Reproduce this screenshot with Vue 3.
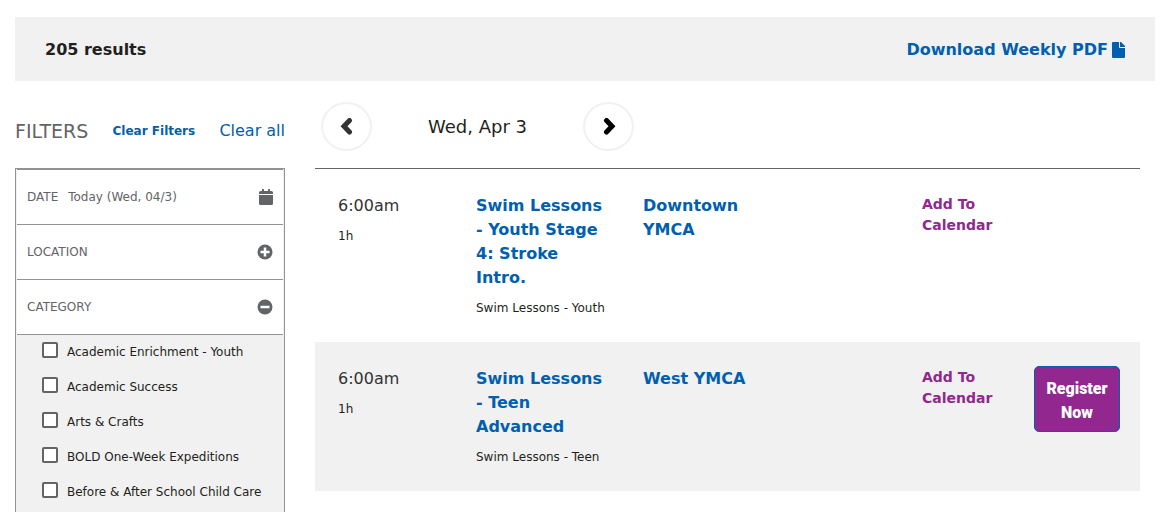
<script setup>
import { ref } from 'vue'

const categories = ref([
  { id: 'enrichment', name: 'Academic Enrichment - Youth', checked: false },
  { id: 'success', name: 'Academic Success', checked: false },
  { id: 'arts', name: 'Arts & Crafts', checked: false },
  { id: 'bold', name: 'BOLD One-Week Expeditions', checked: false },
  { id: 'care', name: 'Before & After School Child Care', checked: false },
])

const sessions = [
  {
    id: 1,
    time: '6:00am',
    duration: '1h',
    title: 'Swim Lessons - Youth Stage 4: Stroke Intro.',
    category: 'Swim Lessons - Youth',
    location: 'Downtown YMCA',
    register: false,
  },
  {
    id: 2,
    time: '6:00am',
    duration: '1h',
    title: 'Swim Lessons - Teen Advanced',
    category: 'Swim Lessons - Teen',
    location: 'West YMCA',
    register: true,
  },
]
</script>

<template>
  <div class="page">
    <header class="results">
      <strong>205 results</strong>
      <a href="#" class="pdf">
        Download Weekly PDF
        <svg width="13" height="16" viewBox="0 0 13 16" aria-hidden="true">
          <path d="M1 0h6v5q0 1 1 1h5v9q0 1-1 1H1q-1 0-1-1V1q0-1 1-1z" />
          <path d="M8 0h1l4 4v1H8z" />
        </svg>
      </a>
    </header>

    <div class="columns">
      <aside>
        <div class="filter-head">
          <h2>FILTERS</h2>
          <a href="#" class="clear-filters">Clear Filters</a>
          <a href="#" class="clear-all">Clear all</a>
        </div>
        <div class="filters">
          <button type="button" class="filter">
            <span>DATE</span>
            <span class="value">Today (Wed, 04/3)</span>
            <svg width="14" height="16" viewBox="0 0 14 16" aria-hidden="true">
              <path d="M0 5V3.500Q0 2 1.500 2H3V.500Q3 0 3.500 0h1q.500 0 .500.500V2h4V.500Q9 0 9.500 0h1q.500 0 .500.500V2h1.500Q14 2 14 3.500V5zM0 6h14v8.500q0 1.500-1.500 1.500h-11Q0 16 0 14.500z" />
            </svg>
          </button>
          <button type="button" class="filter" aria-expanded="false">
            <span>LOCATION</span>
            <svg width="16" height="16" viewBox="0 0 16 16" aria-hidden="true">
              <circle cx="8" cy="8" r="7.500" />
              <path class="sign" d="M3.500 8h9M8 3.500v9" />
            </svg>
          </button>
          <button type="button" class="filter" aria-expanded="true">
            <span>CATEGORY</span>
            <svg width="16" height="16" viewBox="0 0 16 16" aria-hidden="true">
              <circle cx="8" cy="8" r="7.500" />
              <path class="sign" d="M3.500 8h9" />
            </svg>
          </button>
          <ul class="options">
            <li v-for="c in categories" :key="c.id">
              <input :id="c.id" v-model="c.checked" type="checkbox" />
              <label :for="c.id">{{ c.name }}</label>
            </li>
          </ul>
        </div>
      </aside>

      <main>
        <div class="day-nav">
          <button type="button" class="arrow" aria-label="Previous day">
            <svg class="prev" width="14" height="18" viewBox="0 0 14 18" aria-hidden="true">
              <path d="M9.500 2.500 4 8.200l5.500 5.800" />
            </svg>
          </button>
          <span class="day">Wed, Apr 3</span>
          <button type="button" class="arrow" aria-label="Next day">
            <svg width="14" height="18" viewBox="0 0 14 18" aria-hidden="true">
              <path d="M4.500 2.500 10 8.200 4.500 14" />
            </svg>
          </button>
        </div>

        <section class="schedule">
          <article v-for="s in sessions" :key="s.id" class="session">
            <div>
              <div class="time">{{ s.time }}</div>
              <div class="small">{{ s.duration }}</div>
            </div>
            <div>
              <a href="#" class="title">{{ s.title }}</a>
              <div class="small">{{ s.category }}</div>
            </div>
            <div>
              <a href="#" class="title place">{{ s.location }}</a>
            </div>
            <div>
              <a href="#" class="calendar">Add To Calendar</a>
            </div>
            <div class="action">
              <button v-if="s.register" type="button" class="register">Register Now</button>
            </div>
          </article>
        </section>
      </main>
    </div>
  </div>
</template>

<style>
body {
  background: #fff;
}
</style>

<style scoped>
.page {
  height: 100vh;
  box-sizing: border-box;
  overflow: hidden;
  padding: 17px 16px 0 15px;
  font-family: Verdana, "DejaVu Sans", sans-serif;
  font-size: 16px;
  line-height: 24px;
  color: #231f20;
}

a {
  color: #0060af;
  text-decoration: none;
}

button {
  font: inherit;
  cursor: pointer;
}

.results {
  display: flex;
  justify-content: space-between;
  align-items: center;
  padding: 21px 30px 19px;
  background: #f1f1f1;
}

.pdf {
  display: flex;
  align-items: center;
  gap: 4px;
  font-weight: 700;
}

.pdf svg {
  fill: #0060af;
}

.columns {
  display: grid;
  grid-template-columns: 270px 1fr;
  gap: 30px;
  padding-right: 15px;
}

.filter-head {
  display: flex;
  align-items: center;
  justify-content: space-between;
  height: 87px;
  padding-top: 13px;
  box-sizing: border-box;
}

h2 {
  margin: 0;
  font-size: 19px;
  font-weight: 400;
  color: #636466;
}

.clear-filters {
  font-size: 12px;
  font-weight: 700;
}

.filters {
  border: 1px solid #929292;
  padding: 0 1px 24px;
  background: #f1f1f1;
}

.filter {
  display: flex;
  align-items: center;
  width: 100%;
  height: 55px;
  padding: 0 10px;
  border: 0;
  border-bottom: 1px solid #929292;
  background: #fff;
  color: #636466;
  font-size: 12px;
}

.filter:first-child {
  height: 56px;
  border-top: 1px solid #929292;
}

.filter .value {
  margin-left: 10px;
}

.filter svg {
  margin-left: auto;
  fill: #636466;
}

.sign {
  stroke: #fff;
  stroke-width: 2.500;
}

.options {
  list-style: none;
  margin: 0;
  padding: 0 0 0 25px;
}

.options li {
  display: flex;
  align-items: center;
  gap: 9px;
  height: 35px;
  padding-bottom: 2px;
  box-sizing: border-box;
  font-size: 12px;
  white-space: nowrap;
}

.options input {
  appearance: none;
  flex: none;
  width: 16px;
  height: 16px;
  margin: 0 0 3px;
  border: 2px solid #636466;
  border-radius: 2px;
  background: #fff;
}

.options input:checked {
  background: #0060af;
}

.day-nav {
  display: flex;
  align-items: center;
  height: 87px;
  padding: 4px 0 0 6px;
  box-sizing: border-box;
}

.arrow {
  display: flex;
  align-items: center;
  justify-content: center;
  width: 51px;
  height: 49px;
  padding: 0;
  border: 2px solid #f1f1f1;
  border-radius: 50%;
  background: #fff;
}

.arrow svg {
  fill: none;
  stroke: #000;
  stroke-width: 5;
  stroke-linecap: round;
}

.arrow .prev {
  stroke: #333;
}

.day {
  width: 211px;
  text-align: center;
  font-size: 18px;
}

.schedule {
  border-top: 1px solid #636466;
}

.session {
  display: grid;
  grid-template-columns: minmax(0, 138fr) minmax(0, 167fr) minmax(0, 279fr) minmax(0, 112fr) minmax(0, 86fr);
  padding: 25px 20px 23px 23px;
}

.session:nth-child(even) {
  background: #f1f1f1;
}

.time {
  color: #333;
}

.small {
  margin-top: 8px;
  font-size: 12px;
  line-height: 21px;
  white-space: nowrap;
}

.title {
  display: block;
  padding-right: 34px;
  font-weight: 700;
}

.place {
  padding-right: 142px;
}

.calendar {
  display: block;
  padding-right: 30px;
  font-size: 14px;
  line-height: 21px;
  font-weight: 700;
  color: #92278f;
}

.action {
  margin-top: -1px;
}

.register {
  width: 100%;
  padding: 10px 10px 6px;
  border: 1px solid #0060af;
  border-radius: 5px;
  background: #92278f;
  color: #fff;
  font-family: Roboto, sans-serif;
  font-weight: 900;
}
</style>
